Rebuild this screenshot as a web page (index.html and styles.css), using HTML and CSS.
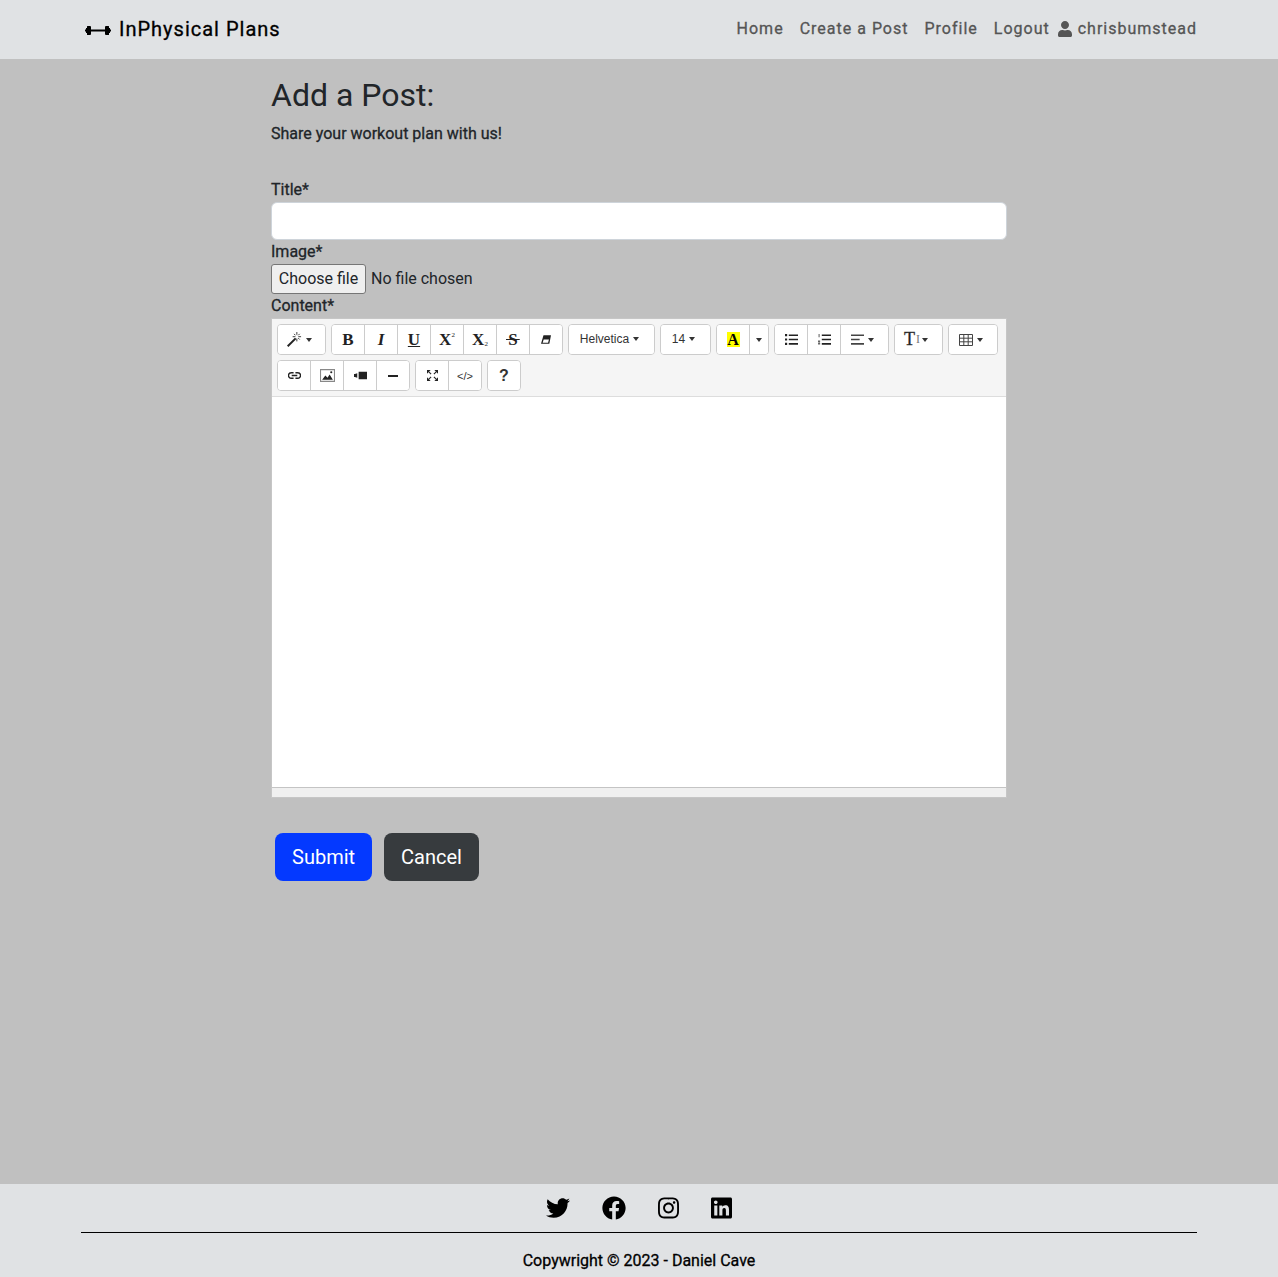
FILE: index.html
```html
<!DOCTYPE html>
<html lang="en">
<head>
<meta charset="utf-8">
<title>InPhysical Plans</title>
<link rel="stylesheet" href="styles.css">
</head>
<body>
<nav class="navbar">
	<a class="brand" href="#">
		<svg class="brand-icon" viewBox="0 0 26 11"><path d="M0 4.500h1V3h1V1.500Q2 1 2.500 1h2.500Q6 1 6 2v2.500h14V2q0-1 1-1h2.500q.5 0 .5.500V3h1v1.500h1v2h-1V8h-1v1.500q0 .5-.5.500H21q-1 0-1-1V6.500H6V9q0 1-1 1H2.500Q2 10 2 9.500V8H1V6.500H0z"/></svg>
		InPhysical Plans
	</a>
	<div class="nav-links">
		<a href="#">Home</a>
		<a href="#">Create a Post</a>
		<a href="#">Profile</a>
		<a href="#">Logout</a>
		<span class="nav-user">
			<svg class="user-icon" viewBox="0 0 448 512"><path d="M224 256c70.700 0 128-57.300 128-128S294.700 0 224 0 96 57.300 96 128s57.300 128 128 128zm89.600 32h-16.700c-22.200 10.200-46.900 16-72.900 16s-50.600-5.800-72.900-16h-16.700C60.200 288 0 348.200 0 422.400V464c0 26.500 21.500 48 48 48h352c26.500 0 48-21.500 48-48v-41.600c0-74.200-60.200-134.400-134.400-134.400z"/></svg>
			chrisbumstead
		</span>
	</div>
</nav>

<main class="content">
	<h1>Add a Post:</h1>
	<p class="intro">Share your workout plan with us!</p>

	<form>
		<label class="field-label first" for="title">Title*</label>
		<input class="text-input" id="title" type="text">

		<label class="field-label">Image*</label>
		<div class="file-row">
			<span class="file-btn">Choose file</span>
			<span>No file chosen</span>
		</div>

		<label class="field-label">Content*</label>
		<div class="editor">
			<div class="toolbar">
				<div class="btn-group">
					<button type="button" class="tool wide-49 wand-tool"><svg viewBox="0 0 16 16" class="ico wand-ico"><path d="M0 14.500 8.500 6l1.500 1.500L1.500 16z"/><path d="M10.500 0v3M10.500 7v3M6 5h3M12 5h3M7.500 2l1.500 1.500M12 6.500l1.500 1.500M13.500 2 12 3.500" stroke="#333" stroke-width="1" fill="none"/></svg><i class="caret"></i></button>
				</div>
				<div class="btn-group">
					<button type="button" class="tool serif"><b>B</b></button>
					<button type="button" class="tool serif"><b><i>I</i></b></button>
					<button type="button" class="tool serif"><b class="under">U</b></button>
					<button type="button" class="tool serif"><b>X</b><span class="sup">2</span></button>
					<button type="button" class="tool serif"><b>X</b><span class="sub">2</span></button>
					<button type="button" class="tool serif"><b class="strike">S</b></button>
					<button type="button" class="tool"><svg viewBox="0 0 12 10" class="ico small"><path d="M3 0h9l-2 10H0zM3.200 5 2 8.800h6.500L9.500 5z"/></svg></button>
				</div>
				<div class="btn-group">
					<button type="button" class="tool text-tool wide-87">Helvetica<i class="caret"></i></button>
				</div>
				<div class="btn-group">
					<button type="button" class="tool text-tool wide-51">14<i class="caret"></i></button>
				</div>
				<div class="btn-group">
					<button type="button" class="tool serif"><b class="hilite">A</b></button>
					<button type="button" class="tool wide-20"><i class="caret flush"></i></button>
				</div>
				<div class="btn-group">
					<button type="button" class="tool"><svg viewBox="0 0 12 10" class="ico"><path d="M0 0h2v2H0zM3.500 .300H12v1.500H3.500zM0 4h2v2H0zM3.500 4.300H12v1.500H3.500zM0 8h2v2H0zM3.500 8.300H12v1.500H3.500z"/></svg></button>
					<button type="button" class="tool"><svg viewBox="0 0 12 10" class="ico"><path d="M3.500 .300H12v1.500H3.500zM3.500 4.300H12v1.500H3.500zM3.500 8.300H12v1.500H3.500z"/><path d="M.500 0h1v3h-1zM0 6h2v1L1 8h1v1.500H0v-1l1-1H0z" opacity=".7"/></svg></button>
					<button type="button" class="tool wide-48"><svg viewBox="0 0 12 10" class="ico"><path d="M0 .300h12v1.500H0zM0 4.300h8v1.500H0zM0 8.300h12v1.500H0z" fill="#444"/></svg><i class="caret"></i></button>
				</div>
				<div class="btn-group">
					<button type="button" class="tool wide-49 serif"><b class="font-height">T</b><span class="cursor-bar">I</span><i class="caret tight"></i></button>
				</div>
				<div class="btn-group">
					<button type="button" class="tool wide-50"><svg viewBox="0 0 14 12" class="ico table-ico"><path d="M.500 .500h13v11H.500zM.500 4.200h13M.500 7.800h13M4.800 .500v11M9.200 .500v11" fill="none" stroke="#444" stroke-width="1"/></svg><i class="caret"></i></button>
				</div>
				<div class="row-break"></div>
				<div class="btn-group">
					<button type="button" class="tool"><svg viewBox="0 0 14 8" class="ico"><path d="M6 1H3.500a3 3 0 0 0 0 6H6M8 1h2.500a3 3 0 0 1 0 6H8M4 4h6" fill="none" stroke="#222" stroke-width="1.500"/></svg></button>
					<button type="button" class="tool"><svg viewBox="0 0 14 12" class="ico pic-ico"><path d="M.500 .500h13v11H.500z" fill="none" stroke="#888"/><path d="M2 10l3-4 2 2 2-3 3 5z" fill="#222"/><circle cx="10.500" cy="3" r="1" fill="#222"/></svg></button>
					<button type="button" class="tool"><svg viewBox="0 0 14 8" class="ico"><path d="M5 0h9v8H5zM0 2.500h1l2.500-1v5L1 5.500H0z"/></svg></button>
					<button type="button" class="tool"><svg viewBox="0 0 10 2" class="ico rule-ico"><path d="M0 0h10v2H0z"/></svg></button>
				</div>
				<div class="btn-group">
					<button type="button" class="tool"><svg viewBox="0 0 12 12" class="ico full-ico"><path d="M0 0h4L0 4zM12 0v4L8 0zM12 12H8l4-4zM0 12V8l4 4z"/><path d="M2 2l2.500 2.500M10 2 7.500 4.500M10 10 7.500 7.500M2 10l2.500-2.500" stroke="#222" stroke-width="1.200" fill="none"/></svg></button>
					<button type="button" class="tool code-tool">&lt;/&gt;</button>
				</div>
				<div class="btn-group">
					<button type="button" class="tool help-tool">?</button>
				</div>
			</div>
			<div class="edit-area" id="body"></div>
			<div class="statusbar"></div>
		</div>

		<div class="actions">
			<button type="submit" class="btn btn-submit">Submit</button>
			<a href="#" class="btn btn-cancel">Cancel</a>
		</div>
	</form>
</main>

<footer class="footer">
	<div class="socials">
		<svg class="twitter" viewBox="0 0 512 512"><path d="M459.370 151.716c.325 4.548.325 9.097.325 13.645 0 138.720-105.583 298.558-298.558 298.558-59.452 0-114.680-17.219-161.137-47.106 8.447.974 16.568 1.299 25.340 1.299 49.055 0 94.213-16.568 130.274-44.832-46.132-.975-84.792-31.188-98.112-72.772 6.498.974 12.995 1.624 19.818 1.624 9.421 0 18.843-1.300 27.614-3.573-48.081-9.747-84.143-51.980-84.143-102.985v-1.299c13.969 7.797 30.214 12.670 47.431 13.319-28.264-18.843-46.781-51.005-46.781-87.391 0-19.492 5.197-37.360 14.294-52.954 51.655 63.675 129.300 105.258 216.365 109.807-1.624-7.797-2.599-15.918-2.599-24.040 0-57.828 46.782-104.934 104.934-104.934 30.213 0 57.502 12.670 76.670 33.137 23.715-4.548 46.456-13.320 66.599-25.340-7.798 24.366-24.366 44.833-46.132 57.827 21.117-2.273 41.584-8.122 60.426-16.243-14.292 20.791-32.161 39.308-52.628 54.253z"/></svg>
		<svg class="facebook" viewBox="0 0 512 512"><path d="M504 256C504 119 393 8 256 8S8 119 8 256c0 123.780 90.690 226.380 209.250 245V327.690h-63V256h63v-54.640c0-62.150 37-96.480 93.670-96.480 27.140 0 55.520 4.840 55.520 4.840v61h-31.280c-30.800 0-40.410 19.120-40.410 38.730V256h68.780l-11 71.690h-57.780V501C413.310 482.380 504 379.780 504 256z"/></svg>
		<svg class="instagram" viewBox="0 0 448 512"><path d="M224.100 141c-63.600 0-114.900 51.300-114.900 114.900s51.300 114.900 114.900 114.900S339 319.500 339 255.900 287.700 141 224.100 141zm0 189.600c-41.100 0-74.700-33.500-74.700-74.700s33.500-74.700 74.700-74.700 74.700 33.500 74.700 74.700-33.600 74.700-74.700 74.700zm146.400-194.300c0 14.900-12 26.800-26.800 26.800-14.900 0-26.800-12-26.800-26.800s12-26.800 26.800-26.800 26.800 12 26.800 26.800zm76.100 27.200c-1.700-35.900-9.900-67.700-36.200-93.900-26.200-26.200-58-34.400-93.900-36.200-37-2.100-147.900-2.100-184.900 0-35.800 1.700-67.600 9.900-93.900 36.100s-34.400 58-36.200 93.900c-2.100 37-2.100 147.900 0 184.900 1.700 35.900 9.900 67.700 36.200 93.900s58 34.400 93.900 36.200c37 2.100 147.900 2.100 184.900 0 35.900-1.700 67.700-9.900 93.900-36.200 26.200-26.200 34.400-58 36.200-93.900 2.100-37 2.100-147.800 0-184.800zM398.800 388c-7.800 19.600-22.900 34.700-42.600 42.600-29.500 11.700-99.500 9-132.100 9s-102.700 2.600-132.100-9c-19.600-7.800-34.700-22.900-42.600-42.600-11.700-29.500-9-99.500-9-132.100s-2.600-102.700 9-132.100c7.800-19.600 22.900-34.700 42.600-42.600 29.500-11.700 99.500-9 132.100-9s102.700-2.600 132.100 9c19.600 7.800 34.700 22.900 42.600 42.600 11.700 29.500 9 99.500 9 132.100s2.700 102.700-9 132.100z"/></svg>
		<svg class="linkedin" viewBox="0 0 448 512"><path d="M416 32H31.900C14.300 32 0 46.500 0 64.300v383.400C0 465.500 14.300 480 31.900 480H416c17.600 0 32-14.500 32-32.300V64.300c0-17.800-14.400-32.300-32-32.300zM135.400 416H69V202.200h66.500V416zm-33.200-243c-21.300 0-38.500-17.300-38.500-38.500S80.900 96 102.200 96c21.200 0 38.500 17.300 38.500 38.500 0 21.300-17.200 38.500-38.500 38.500zm282.100 243h-66.400V312c0-24.800-.5-56.700-34.500-56.700-34.600 0-39.900 27-39.900 54.900V416h-66.400V202.200h63.700v29.200h.9c8.900-16.800 30.600-34.500 62.900-34.500 67.200 0 79.700 44.300 79.700 101.900V416z"/></svg>
	</div>
	<hr class="footer-rule">
	<p class="copy">Copywright &copy; 2023 - Daniel Cave</p>
</footer>
</body>
</html>
```

FILE: styles.css
```css
* { box-sizing: border-box; }
html, body { height: 100%; }
body { margin: 0; min-height: 1277px; display: flex; flex-direction: column; background: #c0c0c0; color: #212529; font-family: Roboto, "Liberation Sans", sans-serif; font-size: 16px; line-height: 24px; }
a { text-decoration: none; color: inherit; }

/* navbar */
.navbar { height: 59px; flex: none; background: #e0e2e4; display: flex; align-items: center; justify-content: space-between; padding: 0 81px 2px 85px; }
.brand { display: flex; align-items: center; color: #000; font-size: 20px; letter-spacing: 1px; -webkit-text-stroke: .3px #000; }
.brand-icon { width: 26px; height: 11px; margin: 3px 8px 0 0; }
.nav-links { display: flex; align-items: center; color: #555; letter-spacing: 1px; -webkit-text-stroke: .3px #555; }
.nav-links a { margin-left: 16px; }
.nav-user { display: flex; align-items: center; margin-left: 8px; }
.user-icon { width: 14px; height: 16px; margin-right: 6px; fill: #555; }

/* form */
.content { flex: 1; width: 736px; margin: 0 auto; }
h1 { margin: 17px 0 0; font-size: 32px; line-height: 38px; font-weight: 400; }
.intro { margin: 8px 0 0; -webkit-text-stroke: .3px #212529; }
.field-label { display: block; -webkit-text-stroke: .3px #212529; }
.field-label.first { margin-top: 32px; }
.text-input { display: block; width: 100%; height: 38px; margin: 0; background: #fff; border: 1px solid #ced4da; border-radius: 6px; }
.file-row { display: flex; align-items: center; gap: 5px; height: 30px; }
.file-btn { display: flex; align-items: center; justify-content: center; width: 95px; height: 30px; background: #efefef; border: 1px solid #767676; border-radius: 3px; }

/* editor */
.editor { border: 1px solid #c6c6c6; height: 480px; background: #fff; display: flex; flex-direction: column; }
.toolbar { height: 78px; flex: none; background: #f5f5f5; border-bottom: 1px solid #ddd; padding: 5px 0 0 5px; display: flex; flex-wrap: wrap; column-gap: 5px; align-content: flex-start; }
.row-break { flex-basis: 100%; height: 0; }
.btn-group { display: flex; height: 31px; margin-bottom: 5px; border: 1px solid #ccc; border-radius: 4px; background: #fff; overflow: hidden; }
.tool { width: 33px; height: 100%; padding: 0; background: #fff; border: 0; border-left: 1px solid #ccc; color: #333; display: flex; align-items: center; justify-content: center; font-family: "Liberation Sans", sans-serif; font-size: 12px; }
.tool:first-child { border-left: 0; width: 32px; }
.text-tool { padding: 0 4px 2px 0; }
.wide-49, .tool.wide-49:first-child { width: 47px; padding-right: 5px; }
.wide-48 { width: 48px; padding-right: 5px; }
.wide-50, .tool.wide-50:first-child { width: 48px; padding-right: 5px; }
.wide-87, .tool.wide-87:first-child { width: 85px; }
.wide-51, .tool.wide-51:first-child { width: 49px; }
.wide-20 { width: 19px; }
.serif { font-family: "Liberation Serif", serif; font-size: 17px; color: #222; }
.caret { width: 0; height: 0; margin-left: 4px; border: 3px solid transparent; border-top: 4px solid #333; border-bottom: 0; }
.caret.flush { margin-left: 0; }
.caret.tight { margin-left: 2px; }
.ico { width: 13px; height: 11px; fill: #222; }
.ico.small { width: 10px; height: 9px; }
.wand-ico { width: 15px; height: 15px; }
.table-ico { width: 14px; height: 12px; }
.pic-ico { width: 15px; height: 13px; }
.rule-ico { width: 10px; height: 2px; }
.full-ico { width: 11px; height: 11px; }
.sup, .sub { font-size: 7px; line-height: 7px; align-self: center; }
.sup { margin-bottom: 8px; }
.sub { margin-top: 9px; }
.under { text-decoration: underline; }
.strike { padding: 0 2px; background: linear-gradient(#222, #222) center / 100% 1px no-repeat; }
.hilite { background: #ff0; color: #000; width: 13px; line-height: 15px; font-size: 16px; }
.font-height { font-size: 18px; font-weight: 400; margin-right: 1px; -webkit-text-stroke: .3px #333; }
.cursor-bar { font-size: 12px; color: #777; }
.code-tool { font-size: 11px; }
.help-tool { font-size: 16px; font-weight: 700; }
.edit-area { flex: 1; background: #fff; }
.statusbar { height: 10px; flex: none; background: #f0f0f0; border-top: 1px solid #c4c4c4; }

/* buttons */
.actions { display: flex; gap: 12px; margin: 35px 0 0 4px; }
.btn { display: flex; align-items: center; justify-content: center; height: 48px; padding: 0 17px; border: 0; border-radius: 8px; color: #fff; font: 20px Roboto, sans-serif; }
.btn-submit { background: #0439ff; }
.btn-cancel { background: #373b3e; }

/* footer */
.footer { flex: none; height: 93px; background: #e0e2e4; padding: 12px 81px 0; }
.socials { display: flex; justify-content: center; align-items: center; height: 24px; color: #000; }
.socials svg { height: 24px; fill: #000; }
.twitter { width: 24px; margin-right: 32px; }
.facebook { width: 24px; margin-right: 32px; }
.instagram { width: 21px; margin-right: 32px; }
.linkedin { width: 21px; }
.footer-rule { margin: 12px 0 0; border: 0; border-top: 1px solid #000; }
.copy { margin: 16px 0 0; text-align: center; color: #000; -webkit-text-stroke: .3px #000; }
```
